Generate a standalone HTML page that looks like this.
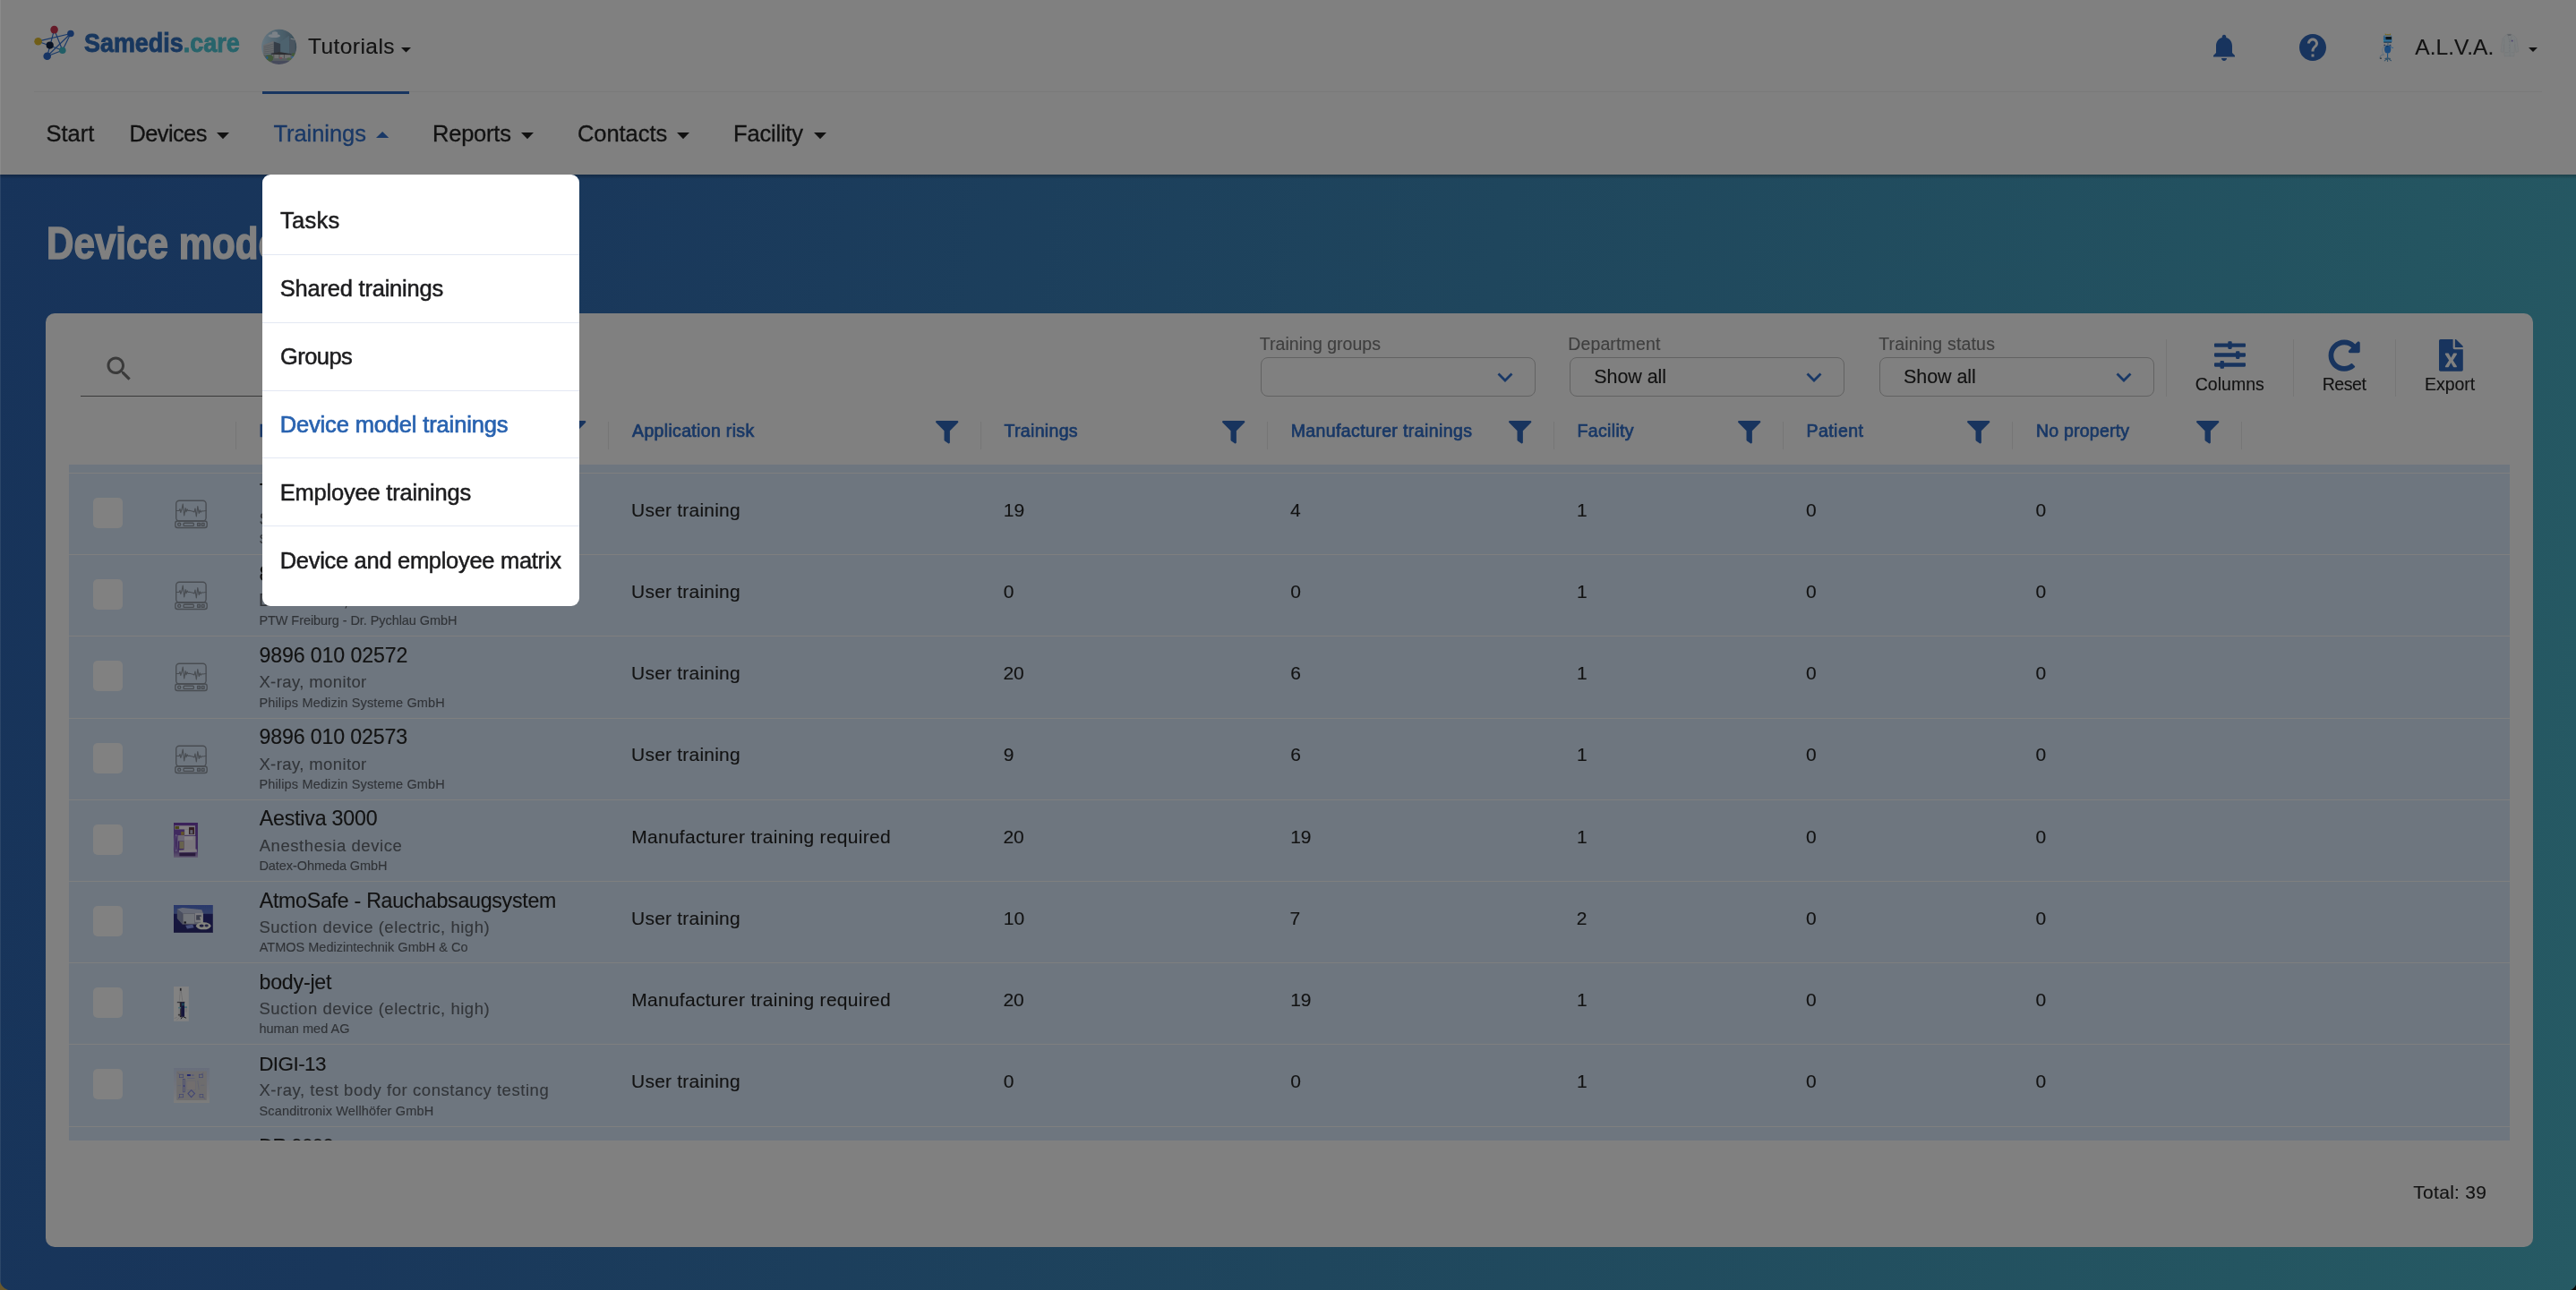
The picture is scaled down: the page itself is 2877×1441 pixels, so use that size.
<!DOCTYPE html><html lang="en"><head><meta charset="utf-8"><title>Device model trainings</title><style>
*{margin:0;padding:0;box-sizing:border-box}
html,body{width:2877px;height:1441px;overflow:hidden;background:#16305a}
body{font-family:"Liberation Sans", sans-serif;}
#app{will-change:transform;position:relative;width:2877px;height:1441px;overflow:hidden;
 background:linear-gradient(100deg,rgb(23,51,90) 0%,rgb(25,55,91) 20%,rgb(31,70,93) 55%,rgb(36,85,97) 88%,rgb(38,90,100) 100%)}
.t{position:absolute;white-space:nowrap;line-height:1;font-weight:400;-webkit-text-stroke:.12px}
.i{position:absolute;display:block;overflow:visible}
.abs{position:absolute}
header{position:absolute;left:0;top:0;width:2877px;height:195px;background:#808080}
.hline{position:absolute;left:38px;top:102px;width:2801px;height:1px;background:#7a7a7a}
.ind{position:absolute;left:293px;top:102px;width:164px;height:3px;background:rgb(24,53,96)}
.shade{position:absolute;left:0;top:195px;width:2877px;height:5px;background:linear-gradient(rgba(0,0,0,.25),rgba(0,0,0,0))}
h1{position:absolute;left:51.8px;top:247.2px;font-size:50px;line-height:1;font-weight:700;color:#808080;-webkit-text-stroke:1.6px #808080;white-space:nowrap;transform-origin:0 0;transform:scaleX(.843)}
.card{position:absolute;left:51px;top:350px;width:2778px;height:1043px;border-radius:10px;background:#808080}
.sel{position:absolute;top:399px;width:307px;height:44px;border:1.500px solid rgb(98,98,98);border-radius:8px}
.vd{position:absolute;top:379px;width:1px;height:64px;background:rgb(118,118,118)}
.cs{position:absolute;top:471px;width:1px;height:31px;background:rgb(118,118,118)}
.uline{position:absolute;left:90px;top:442px;width:540px;height:1px;background:rgb(58,58,58)}
#tb{position:absolute;left:0;top:0;width:2877px;height:1273.500px;overflow:hidden}
.band{position:absolute;left:77px;width:2726px;background:rgb(110,118,127)}
.row{position:absolute;left:77px;width:2726px;border-top:1px solid #7f7f7f;background:rgb(110,118,127)}
.cb{position:absolute;left:104px;width:33px;height:34px;border-radius:5px;background:#818181}
#menu{position:absolute;left:293px;top:195px;width:354px;height:481.500px;background:#fff;border-radius:9px}
#menu i{position:absolute;left:0;width:354px;height:1px;background:rgb(227,232,243)}
.corner{position:absolute;left:0;bottom:0;width:13px;height:13px;background:radial-gradient(circle at 13px 0,rgba(0,0,0,0) 13px,rgb(104,88,46) 14px)}
.corner2{position:absolute;right:0;bottom:0;width:10px;height:10px;background:radial-gradient(circle at 0 0,rgba(0,0,0,0) 10.300px,#0a0806 11.200px)}
.ledge{position:absolute;left:0;top:0;width:1px;height:1441px;background:rgba(255,255,255,.09)}
</style></head><body><div id="app">
<div class="shade"></div>
<header>
<svg class="i" style="left:0;top:0" width="100" height="80" viewBox="0 0 100 80"><g stroke="rgb(26,58,106)" stroke-width="1.2"><line x1="42.6" y1="46.2" x2="78.9" y2="37.5"/><line x1="42.6" y1="46.2" x2="69.8" y2="56.2"/><line x1="60.6" y1="33.1" x2="52.7" y2="62.8"/><line x1="60.6" y1="33.1" x2="69.8" y2="56.2"/><line x1="78.9" y1="37.5" x2="52.7" y2="62.8"/><line x1="78.9" y1="37.5" x2="69.8" y2="56.2"/><line x1="52.7" y1="62.8" x2="69.8" y2="56.2"/></g><circle cx="60.6" cy="33.1" r="4.3" fill="rgb(102,27,41)"/><circle cx="78.9" cy="37.5" r="3.8" fill="rgb(22,52,100)"/><circle cx="42.6" cy="46.2" r="4.3" fill="rgb(112,94,24)"/><circle cx="55.7" cy="50.6" r="4.1" fill="rgb(8,18,36)"/><circle cx="69.8" cy="56.2" r="3.8" fill="rgb(33,94,102)"/><circle cx="52.7" cy="62.8" r="4.3" fill="rgb(22,52,100)"/></svg>
<span class="t" id="logo" style="left:93.6px;top:33.2px;font-size:29.4px;font-weight:700;transform-origin:0 0;transform:scaleX(.916);color:rgb(24,55,94);-webkit-text-stroke:.9px rgb(24,55,94)">Samedis<span style="color:rgb(40,100,107);-webkit-text-stroke:.9px rgb(40,100,107)">.care</span></span>
<svg class="i" style="left:281px;top:27px" width="60" height="50" viewBox="0 0 1548 1290"><defs><clipPath id="av"><circle cx="790" cy="655" r="505"/></clipPath><linearGradient id="sky" x1="0" y1="0" x2="1" y2="0"><stop offset="0" stop-color="rgb(104,120,130)"/><stop offset=".55" stop-color="rgb(76,96,108)"/><stop offset="1" stop-color="rgb(58,76,86)"/></linearGradient><filter id="ab"><feGaussianBlur stdDeviation="9"/></filter></defs><g clip-path="url(#av)"><g filter="url(#ab)"><rect x="250" y="120" width="1080" height="1080" fill="url(#sky)"/><ellipse cx="650" cy="335" rx="175" ry="52" fill="rgb(124,130,136)"/><ellipse cx="670" cy="272" rx="82" ry="58" fill="rgb(124,130,136)"/><path d="M780 545l300-215 10 540-270-70z" fill="rgb(78,98,110)"/><path d="M1090 350l70 70 90 20 10 430h-170z" fill="rgb(72,84,94)"/><path d="M1125 400l120 30v30l-120-25z" fill="rgb(122,128,132)"/><path d="M335 600l285-110 20 10v330l-305 50z" fill="rgb(106,109,111)"/><path d="M350 650l280-80M350 700l280-65M350 750l280-50M350 800l280-35M350 845l280-20" stroke="rgb(80,86,92)" stroke-width="18" fill="none"/><path d="M640 500l190 70v230l-190 30z" fill="rgb(52,60,70)"/><rect x="270" y="880" width="1050" height="300" fill="rgb(86,92,96)"/><rect x="600" y="870" width="520" height="115" fill="rgb(112,114,114)"/><path d="M640 880v100M800 880v100M940 880v100" stroke="rgb(70,72,74)" stroke-width="22"/><path d="M560 842l230-42 360 58v24l-590-12z" fill="rgb(46,46,50)"/><ellipse cx="510" cy="980" rx="115" ry="95" fill="rgb(66,88,58)"/><ellipse cx="1205" cy="880" rx="55" ry="55" fill="rgb(66,90,58)"/><ellipse cx="1080" cy="1000" rx="70" ry="40" fill="rgb(78,100,70)"/><rect x="420" y="930" width="52" height="72" fill="rgb(40,90,140)"/><rect x="1150" y="930" width="60" height="52" fill="rgb(44,100,150)"/><rect x="800" y="960" width="80" height="34" fill="rgb(128,70,80)"/><path d="M560 1060h560l-120 110H640z" fill="rgb(70,76,92)"/></g></g></svg>
<span class="t" style="left:344.0px;top:40.0px;font-size:24.5px;letter-spacing:0.44px;color:#121212;">Tutorials</span>
<svg class="i" style="left:448px;top:52.5px" width="11" height="5.5" viewBox="0 0 11 5.5" ><polygon fill="#111" points="0,0 11,0 5.5,5.5"/></svg>
<svg class="i" style="left:2466px;top:34.5px" width="36" height="36" viewBox="0 0 24 24" ><path fill="rgb(24,52,94)" d="M12 22c1.1 0 2-.9 2-2h-4c0 1.1.89 2 2 2zm6-6v-5c0-3.07-1.64-5.64-4.5-6.32V4c0-.83-.67-1.5-1.5-1.5s-1.5.67-1.5 1.5v.68C7.63 5.36 6 7.92 6 11v5l-2 2v1h16v-1l-2-2z"/></svg>
<svg class="i" style="left:2565px;top:34.7px" width="36" height="36" viewBox="0 0 24 24" ><path fill="rgb(24,52,94)" d="M12 2C6.48 2 2 6.480 2 12s4.480 10 10 10 10-4.480 10-10S17.520 2 12 2zm1 17h-2v-2h2v2zm2.070-7.750l-.9.920C13.450 12.900 13 13.500 13 15h-2v-.5c0-1.100.450-2.100 1.170-2.830l1.240-1.260c.370-.360.590-.860.590-1.410 0-1.100-.9-2-2-2s-2 .9-2 2H8c0-2.210 1.790-4 4-4s4 1.790 4 4c0 .880-.360 1.680-.930 2.250z"/></svg>
<svg class="i" style="left:2640px;top:28px" width="60" height="50" viewBox="0 0 1548 1290"><filter id="rb"><feGaussianBlur stdDeviation="7"/></filter><g filter="url(#rb)"><path d="M615 300V238l45 35 35-18 35 18 45-33v60z" fill="rgb(126,106,30)"/><rect x="565" y="298" width="245" height="208" rx="38" fill="rgb(44,100,140)"/><rect x="600" y="300" width="190" height="36" rx="10" fill="rgb(112,122,130)"/><rect x="632" y="335" width="165" height="88" rx="14" fill="rgb(14,24,30)"/><rect x="610" y="425" width="190" height="55" rx="12" fill="rgb(52,114,156)"/><rect x="568" y="436" width="30" height="36" rx="8" fill="rgb(40,140,150)"/><rect x="575" y="482" width="225" height="24" rx="10" fill="rgb(16,28,40)"/><rect x="680" y="505" width="30" height="60" fill="rgb(60,90,115)"/><rect x="578" y="558" width="44" height="44" rx="8" fill="rgb(44,56,86)"/><rect x="738" y="562" width="44" height="42" rx="8" fill="rgb(44,56,86)"/><ellipse cx="688" cy="697" rx="93" ry="117" fill="rgb(26,76,126)"/><ellipse cx="675" cy="610" rx="30" ry="14" fill="rgb(20,52,90)"/><path d="M770 600l32 52 40 4" stroke="rgb(40,92,140)" stroke-width="22" fill="none" stroke-linecap="round"/><path d="M592 605c-50 60-75 110-55 190l40 62" stroke="rgb(92,112,128)" stroke-width="20" fill="none" stroke-linecap="round"/><path d="M565 855c-60 0-100 20-98 100" stroke="rgb(70,98,120)" stroke-width="20" fill="none" stroke-linecap="round"/><rect x="462" y="944" width="54" height="32" rx="8" fill="rgb(46,52,58)"/><rect x="671" y="805" width="30" height="140" fill="rgb(30,82,128)"/><path d="M686 950L600 1030M686 950l100 75M686 950v95M686 950l-70 20M686 950l75 15" stroke="rgb(52,82,104)" stroke-width="26" fill="none" stroke-linecap="round"/></g></svg>
<span class="t" style="left:2697.3px;top:41.0px;font-size:24.5px;letter-spacing:0.04px;color:#121212;">A.L.V.A.</span>
<svg class="i" style="left:2780px;top:28px" width="60" height="50" viewBox="0 0 1548 1290"><filter id="cb"><feGaussianBlur stdDeviation="6"/></filter><g filter="url(#cb)"><path d="M440 330l80-65q60-15 120 0l95 55 55 60 60 380-75 25-35-225-20 340H440l-10-340-30 225-65-20 55-385z" fill="rgb(124,127,128)" stroke="rgb(112,115,117)" stroke-width="10"/><path d="M520 265q60-15 120 0l-15 45h-85z" fill="rgb(98,101,104)"/><path d="M540 310l60 170 50-160" stroke="rgb(106,109,112)" stroke-width="10" fill="none"/><path d="M600 480v420M440 400l-10 160M735 400l5 160M455 790h105M640 790h72" stroke="rgb(110,113,116)" stroke-width="9" fill="none"/><circle cx="580" cy="480" r="11" fill="rgb(100,103,110)"/><circle cx="580" cy="572" r="11" fill="rgb(100,103,110)"/><circle cx="580" cy="660" r="11" fill="rgb(100,103,110)"/><circle cx="580" cy="745" r="11" fill="rgb(100,103,110)"/><rect x="640" y="432" width="44" height="44" fill="rgb(76,64,112)"/></g></svg>
<svg class="i" style="left:2824px;top:53px" width="10" height="5" viewBox="0 0 10 5" ><polygon fill="#111" points="0,0 10,0 5.0,5"/></svg>
<div class="hline"></div><div class="ind"></div>
<nav>
<span class="t" style="left:51.4px;top:137.0px;font-size:25.5px;letter-spacing:0.04px;color:#121212;-webkit-text-stroke:.3px;">Start</span>
<span class="t" style="left:144.5px;top:137.0px;font-size:25.35px;letter-spacing:-0.55px;color:#121212;-webkit-text-stroke:.3px;">Devices</span>
<span class="t" style="left:305.5px;top:137.0px;font-size:25.5px;letter-spacing:-0.06px;color:rgb(25,56,102);-webkit-text-stroke:.3px;">Trainings</span>
<span class="t" style="left:483.0px;top:137.0px;font-size:25.5px;letter-spacing:-0.22px;color:#121212;-webkit-text-stroke:.3px;">Reports</span>
<span class="t" style="left:645.0px;top:137.0px;font-size:25.5px;letter-spacing:-0.06px;color:#121212;-webkit-text-stroke:.3px;">Contacts</span>
<span class="t" style="left:819.0px;top:137.0px;font-size:25.5px;letter-spacing:-0.19px;color:#121212;-webkit-text-stroke:.3px;">Facility</span>
<svg class="i" style="left:242.4px;top:147.8px" width="14" height="7.2" viewBox="0 0 14 7.2" ><polygon fill="#111" points="0,0 14,0 7.0,7.2"/></svg>
<svg class="i" style="left:419.7px;top:147px" width="14.3" height="7" viewBox="0 0 14.3 7" ><polygon fill="rgb(25,56,102)" points="0,7 7.15,0 14.3,7"/></svg>
<svg class="i" style="left:582px;top:147.8px" width="14" height="7.2" viewBox="0 0 14 7.2" ><polygon fill="#111" points="0,0 14,0 7.0,7.2"/></svg>
<svg class="i" style="left:755.9px;top:147.8px" width="14" height="7.2" viewBox="0 0 14 7.2" ><polygon fill="#111" points="0,0 14,0 7.0,7.2"/></svg>
<svg class="i" style="left:908.6px;top:147.8px" width="14" height="7.2" viewBox="0 0 14 7.2" ><polygon fill="#111" points="0,0 14,0 7.0,7.2"/></svg>
</nav></header>
<main>
<h1>Device model trainings</h1>
<section class="card"></section>
<svg class="i" style="left:114.5px;top:393.6px" width="36" height="36" viewBox="0 0 24 24" ><path fill="rgb(58,58,58)" d="M15.500 14h-.790l-.280-.270C15.410 12.590 16 11.110 16 9.500 16 5.910 13.090 3 9.500 3S3 5.910 3 9.500 5.910 16 9.500 16c1.610 0 3.090-.590 4.230-1.570l.270.280v.790l5 4.990L20.490 19l-4.990-5zm-6 0C7.010 14 5 11.990 5 9.500S7.010 5 9.500 5 14 7.010 14 9.500 11.990 14 9.500 14z"/></svg>
<div class="uline"></div>
<span class="t" style="left:1406.8px;top:375.0px;font-size:19.5px;letter-spacing:0.03px;color:rgb(62,62,62);">Training groups</span>
<div class="sel" style="left:1408px"></div>
<svg class="i" style="left:1672px;top:416px" width="18" height="11" viewBox="0 0 18 11" ><polyline points="1.500,1.500 9,9 16.500,1.500" fill="none" stroke="rgb(25,56,102)" stroke-width="2.800"/></svg>
<span class="t" style="left:1751.2px;top:375.0px;font-size:19.5px;letter-spacing:0.14px;color:rgb(62,62,62);">Department</span>
<div class="sel" style="left:1753px"></div>
<svg class="i" style="left:2017px;top:416px" width="18" height="11" viewBox="0 0 18 11" ><polyline points="1.500,1.500 9,9 16.500,1.500" fill="none" stroke="rgb(25,56,102)" stroke-width="2.800"/></svg>
<span class="t" style="left:2098.2px;top:375.0px;font-size:19.5px;letter-spacing:0.18px;color:rgb(62,62,62);">Training status</span>
<div class="sel" style="left:2099px"></div>
<svg class="i" style="left:2363px;top:416px" width="18" height="11" viewBox="0 0 18 11" ><polyline points="1.500,1.500 9,9 16.500,1.500" fill="none" stroke="rgb(25,56,102)" stroke-width="2.800"/></svg>
<span class="t" style="left:1780.3px;top:411.0px;font-size:21.5px;letter-spacing:-0.07px;color:#121212;">Show all</span>
<span class="t" style="left:2126.0px;top:411.0px;font-size:21.5px;letter-spacing:-0.07px;color:#121212;">Show all</span>
<div class="vd" style="left:2419px"></div>
<div class="vd" style="left:2561px"></div>
<div class="vd" style="left:2675px"></div>
<svg class="i" style="left:2473px;top:378.8px" width="35" height="35" viewBox="0 0 512 512" ><path fill="rgb(24,52,94)" d="M496 384H160v-16c0-8.8-7.2-16-16-16h-32c-8.8 0-16 7.2-16 16v16H16c-8.8 0-16 7.2-16 16v32c0 8.8 7.2 16 16 16h80v16c0 8.8 7.2 16 16 16h32c8.8 0 16-7.2 16-16v-16h336c8.8 0 16-7.2 16-16v-32c0-8.8-7.2-16-16-16zm0-160h-80v-16c0-8.8-7.2-16-16-16h-32c-8.8 0-16 7.2-16 16v16H16c-8.8 0-16 7.2-16 16v32c0 8.8 7.2 16 16 16h336v16c0 8.8 7.2 16 16 16h32c8.8 0 16-7.2 16-16v-16h80c8.8 0 16-7.2 16-16v-32c0-8.8-7.2-16-16-16zm0-160H288V48c0-8.8-7.2-16-16-16h-32c-8.8 0-16 7.2-16 16v16H16C7.2 64 0 71.2 0 80v32c0 8.8 7.2 16 16 16h208v16c0 8.8 7.2 16 16 16h32c8.8 0 16-7.2 16-16v-16h208c8.8 0 16-7.2 16-16V80c0-8.8-7.2-16-16-16z"/></svg>
<svg class="i" style="left:2600.3px;top:379px" width="36.3" height="36.3" viewBox="0 0 512 512" ><path fill="rgb(24,52,94)" d="M256.455 8c66.269.119 126.437 26.233 170.859 68.685l35.715-35.715C478.149 25.851 504 36.559 504 57.941V192c0 13.255-10.745 24-24 24H345.941c-21.382 0-32.09-25.851-16.971-40.971l41.75-41.75c-30.864-28.899-70.801-44.907-113.23-45.273-92.398-.798-170.283 73.977-169.484 169.442C88.764 348.009 162.184 424 256 424c41.127 0 79.997-14.678 110.629-41.556 4.743-4.161 11.906-3.908 16.368.553l39.662 39.662c4.872 4.872 4.631 12.815-.482 17.433C378.202 479.813 319.926 504 256 504 119.034 504 8.001 392.967 8 256.002 7.999 119.193 119.646 7.755 256.455 8z"/></svg>
<svg class="i" style="left:2723.6px;top:379px" width="26.8" height="35.7" viewBox="0 0 384 512" ><path fill="rgb(24,52,94)" d="M224 136V0H24C10.7 0 0 10.7 0 24v464c0 13.3 10.7 24 24 24h336c13.3 0 24-10.7 24-24V160H248c-13.2 0-24-10.8-24-24zm60.1 106.5L224 336l60.1 93.5c5.1 8-.6 18.5-10.1 18.5h-34.9c-4.4 0-8.5-2.4-10.6-6.3C208.9 405.5 192 373 192 373c-6.4 14.8-10 20-36.600 68.800-2.100 3.900-6.100 6.300-10.500 6.300H110c-9.500 0-15.200-10.500-10.100-18.500l60.300-93.500-60.300-93.500c-5.200-8 .6-18.500 10.100-18.500h34.800c4.400 0 8.500 2.400 10.600 6.300 26.100 48.800 20 33.600 36.600 68.500 0 0 6.100-11.700 36.600-68.500 2.100-3.900 6.200-6.300 10.600-6.300H274c9.500-.1 15.200 10.400 10.100 18.400zM384 121.900v6.100H256V0h6.100c6.400 0 12.500 2.500 17 7l97.900 98c4.500 4.500 7 10.600 7 16.900z"/></svg>
<span class="t" style="left:2451.7px;top:420.0px;font-size:19.5px;letter-spacing:0.03px;color:#121212;">Columns</span>
<span class="t" style="left:2593.7px;top:420.0px;font-size:19.5px;letter-spacing:-0.45px;color:#121212;">Reset</span>
<span class="t" style="left:2708.1px;top:420.0px;font-size:19.5px;letter-spacing:-0.08px;color:#121212;">Export</span>
<div class="cs" style="left:263px"></div>
<div class="cs" style="left:679px"></div>
<div class="cs" style="left:1095px"></div>
<div class="cs" style="left:1415px"></div>
<div class="cs" style="left:1735px"></div>
<div class="cs" style="left:1991px"></div>
<div class="cs" style="left:2247px"></div>
<div class="cs" style="left:2503px"></div>
<span class="t" style="left:289.2px;top:471.0px;font-size:20.51px;letter-spacing:0.55px;color:rgb(25,56,102);-webkit-text-stroke:0.7px rgb(25,56,102);">Model</span>
<span class="t" style="left:706.1px;top:472.0px;font-size:19.5px;letter-spacing:0.33px;color:rgb(25,56,102);-webkit-text-stroke:0.7px rgb(25,56,102);">Application risk</span>
<span class="t" style="left:1121.5px;top:472.0px;font-size:19.5px;letter-spacing:0.33px;color:rgb(25,56,102);-webkit-text-stroke:0.7px rgb(25,56,102);">Trainings</span>
<span class="t" style="left:1441.7px;top:472.0px;font-size:19.5px;letter-spacing:0.39px;color:rgb(25,56,102);-webkit-text-stroke:0.7px rgb(25,56,102);">Manufacturer trainings</span>
<span class="t" style="left:1761.5px;top:472.0px;font-size:19.5px;letter-spacing:0.35px;color:rgb(25,56,102);-webkit-text-stroke:0.7px rgb(25,56,102);">Facility</span>
<span class="t" style="left:2017.6px;top:472.0px;font-size:19.5px;letter-spacing:0.42px;color:rgb(25,56,102);-webkit-text-stroke:0.7px rgb(25,56,102);">Patient</span>
<span class="t" style="left:2274.0px;top:472.0px;font-size:19.5px;letter-spacing:0.22px;color:rgb(25,56,102);-webkit-text-stroke:0.7px rgb(25,56,102);">No property</span>
<svg class="i" style="left:629.0px;top:469.8px" width="25.4" height="25.4" viewBox="0 0 512 512" ><path fill="rgb(24,52,94)" d="M487.976 0H24.028C2.71 0-8.047 25.866 7.058 40.971L192 225.941V432c0 7.831 3.821 15.17 10.237 19.662l80 55.98C298.02 518.69 320 507.493 320 487.98V225.941l184.947-184.97C520.021 25.896 509.338 0 487.976 0z"/></svg>
<svg class="i" style="left:1045.0px;top:469.8px" width="25.4" height="25.4" viewBox="0 0 512 512" ><path fill="rgb(24,52,94)" d="M487.976 0H24.028C2.71 0-8.047 25.866 7.058 40.971L192 225.941V432c0 7.831 3.821 15.17 10.237 19.662l80 55.98C298.02 518.69 320 507.493 320 487.98V225.941l184.947-184.97C520.021 25.896 509.338 0 487.976 0z"/></svg>
<svg class="i" style="left:1365.2px;top:469.8px" width="25.4" height="25.4" viewBox="0 0 512 512" ><path fill="rgb(24,52,94)" d="M487.976 0H24.028C2.71 0-8.047 25.866 7.058 40.971L192 225.941V432c0 7.831 3.821 15.17 10.237 19.662l80 55.98C298.02 518.69 320 507.493 320 487.98V225.941l184.947-184.97C520.021 25.896 509.338 0 487.976 0z"/></svg>
<svg class="i" style="left:1685.2px;top:469.8px" width="25.4" height="25.4" viewBox="0 0 512 512" ><path fill="rgb(24,52,94)" d="M487.976 0H24.028C2.71 0-8.047 25.866 7.058 40.971L192 225.941V432c0 7.831 3.821 15.17 10.237 19.662l80 55.98C298.02 518.69 320 507.493 320 487.98V225.941l184.947-184.97C520.021 25.896 509.338 0 487.976 0z"/></svg>
<svg class="i" style="left:1941.0px;top:469.8px" width="25.4" height="25.4" viewBox="0 0 512 512" ><path fill="rgb(24,52,94)" d="M487.976 0H24.028C2.71 0-8.047 25.866 7.058 40.971L192 225.941V432c0 7.831 3.821 15.17 10.237 19.662l80 55.98C298.02 518.69 320 507.493 320 487.98V225.941l184.947-184.97C520.021 25.896 509.338 0 487.976 0z"/></svg>
<svg class="i" style="left:2197.2px;top:469.8px" width="25.4" height="25.4" viewBox="0 0 512 512" ><path fill="rgb(24,52,94)" d="M487.976 0H24.028C2.71 0-8.047 25.866 7.058 40.971L192 225.941V432c0 7.831 3.821 15.17 10.237 19.662l80 55.98C298.02 518.69 320 507.493 320 487.98V225.941l184.947-184.97C520.021 25.896 509.338 0 487.976 0z"/></svg>
<svg class="i" style="left:2453.2px;top:469.8px" width="25.4" height="25.4" viewBox="0 0 512 512" ><path fill="rgb(24,52,94)" d="M487.976 0H24.028C2.71 0-8.047 25.866 7.058 40.971L192 225.941V432c0 7.831 3.821 15.17 10.237 19.662l80 55.98C298.02 518.69 320 507.493 320 487.98V225.941l184.947-184.97C520.021 25.896 509.338 0 487.976 0z"/></svg>
<div id="tb"><div class="band" style="top:519px;height:10px"></div>
<div class="row" style="top:528px;height:91px"></div>
<div class="cb" style="top:556px"></div>
<svg class="i" style="left:195px;top:557.6px" width="37" height="33" viewBox="0 0 37 33" ><g fill="none" stroke="rgb(73,77,82)" stroke-width="1.35" stroke-linejoin="round" stroke-linecap="round"><rect x="1.7" y="1.2" width="33.4" height="22.8" rx="3.5"/><rect x="0.8" y="24" width="35.4" height="7.5" rx="2.5"/><circle cx="5.2" cy="27.8" r="1.6"/><rect x="10" y="26.2" width="11.4" height="3.2" rx="1"/><rect x="25.6" y="26.5" width="2.8" height="2.7"/><rect x="30.3" y="26.500" width="2.8" height="2.7"/><polyline stroke-width="1.1" points="1.7,12.5 5,12.500 6,10.500 6.800,14.500 8,11 9.200,5 10.700,18 12.200,9.500 13,13.800 14,10.800 15,12.500 16.500,12.200 20.500,13.200 22,14 23,10 24.300,19 25.800,7.500 27.200,15.500 28.200,11.800 29.200,14.200 30.200,12.800 31.500,13 35.100,12.500"/></g></svg>
<span class="t" style="left:288.9px;top:537.0px;font-size:25.2px;letter-spacing:0.55px;color:#121212;">7100 Ultrasound</span>
<span class="t" style="left:289.4px;top:571.0px;font-size:18.5px;letter-spacing:0.19px;color:rgb(50,53,57);">Sonography device</span>
<span class="t" style="left:289.5px;top:595.0px;font-size:14.5px;letter-spacing:0.22px;color:rgb(48,51,55);">Siemens Healthcare GmbH</span>
<span class="t" style="left:705.1px;top:559.0px;font-size:21px;letter-spacing:0.21px;color:#121212;">User training</span>
<span class="t" style="left:1120.8px;top:559.0px;font-size:21px;letter-spacing:-0.10px;color:#121212;">19</span>
<span class="t" style="left:1441.0px;top:559.0px;font-size:21px;letter-spacing:-0.10px;color:#121212;">4</span>
<span class="t" style="left:1761.0px;top:559.0px;font-size:21px;letter-spacing:-0.10px;color:#121212;">1</span>
<span class="t" style="left:2017.1px;top:559.0px;font-size:21px;letter-spacing:-0.10px;color:#121212;">0</span>
<span class="t" style="left:2273.5px;top:559.0px;font-size:21px;letter-spacing:-0.10px;color:#121212;">0</span>
<div class="row" style="top:619px;height:91px"></div>
<div class="cb" style="top:647px"></div>
<svg class="i" style="left:195px;top:648.6px" width="37" height="33" viewBox="0 0 37 33" ><g fill="none" stroke="rgb(73,77,82)" stroke-width="1.35" stroke-linejoin="round" stroke-linecap="round"><rect x="1.7" y="1.2" width="33.4" height="22.8" rx="3.5"/><rect x="0.8" y="24" width="35.4" height="7.5" rx="2.5"/><circle cx="5.2" cy="27.8" r="1.6"/><rect x="10" y="26.2" width="11.4" height="3.2" rx="1"/><rect x="25.6" y="26.5" width="2.8" height="2.7"/><rect x="30.3" y="26.500" width="2.8" height="2.7"/><polyline stroke-width="1.1" points="1.7,12.5 5,12.500 6,10.500 6.800,14.500 8,11 9.200,5 10.700,18 12.200,9.500 13,13.800 14,10.800 15,12.500 16.500,12.200 20.500,13.200 22,14 23,10 24.300,19 25.800,7.500 27.200,15.500 28.200,11.800 29.200,14.200 30.200,12.800 31.500,13 35.100,12.500"/></g></svg>
<span class="t" style="left:289.5px;top:630.0px;font-size:22.99px;letter-spacing:-0.55px;color:#121212;">8000 UNIDOS</span>
<span class="t" style="left:289.1px;top:661.0px;font-size:19.87px;letter-spacing:0.55px;color:rgb(50,53,57);">Dosimeter, radiation</span>
<span class="t" style="left:289.4px;top:686.0px;font-size:14.5px;letter-spacing:-0.07px;color:rgb(48,51,55);">PTW Freiburg - Dr. Pychlau GmbH</span>
<span class="t" style="left:705.1px;top:650.0px;font-size:21px;letter-spacing:0.21px;color:#121212;">User training</span>
<span class="t" style="left:1120.8px;top:650.0px;font-size:21px;letter-spacing:-0.10px;color:#121212;">0</span>
<span class="t" style="left:1441.2px;top:650.0px;font-size:21px;letter-spacing:-0.10px;color:#121212;">0</span>
<span class="t" style="left:1761.0px;top:650.0px;font-size:21px;letter-spacing:-0.10px;color:#121212;">1</span>
<span class="t" style="left:2017.1px;top:650.0px;font-size:21px;letter-spacing:-0.10px;color:#121212;">0</span>
<span class="t" style="left:2273.5px;top:650.0px;font-size:21px;letter-spacing:-0.10px;color:#121212;">0</span>
<div class="row" style="top:710px;height:92px"></div>
<div class="cb" style="top:738px"></div>
<svg class="i" style="left:195px;top:739.6px" width="37" height="33" viewBox="0 0 37 33" ><g fill="none" stroke="rgb(73,77,82)" stroke-width="1.35" stroke-linejoin="round" stroke-linecap="round"><rect x="1.7" y="1.2" width="33.4" height="22.8" rx="3.5"/><rect x="0.8" y="24" width="35.4" height="7.5" rx="2.5"/><circle cx="5.2" cy="27.8" r="1.6"/><rect x="10" y="26.2" width="11.4" height="3.2" rx="1"/><rect x="25.6" y="26.5" width="2.8" height="2.7"/><rect x="30.3" y="26.500" width="2.8" height="2.7"/><polyline stroke-width="1.1" points="1.7,12.5 5,12.500 6,10.500 6.800,14.500 8,11 9.200,5 10.700,18 12.200,9.500 13,13.800 14,10.800 15,12.500 16.500,12.200 20.500,13.200 22,14 23,10 24.300,19 25.800,7.500 27.200,15.500 28.200,11.800 29.200,14.200 30.200,12.800 31.500,13 35.100,12.500"/></g></svg>
<span class="t" style="left:289.4px;top:721.0px;font-size:23.2px;letter-spacing:-0.13px;color:#121212;">9896 010 02572</span>
<span class="t" style="left:289.4px;top:753.0px;font-size:18.5px;letter-spacing:0.39px;color:rgb(50,53,57);">X-ray, monitor</span>
<span class="t" style="left:289.4px;top:778.0px;font-size:14.5px;letter-spacing:0.16px;color:rgb(48,51,55);">Philips Medizin Systeme GmbH</span>
<span class="t" style="left:705.1px;top:741.0px;font-size:21px;letter-spacing:0.21px;color:#121212;">User training</span>
<span class="t" style="left:1120.5px;top:741.0px;font-size:21px;letter-spacing:-0.10px;color:#121212;">20</span>
<span class="t" style="left:1441.2px;top:741.0px;font-size:21px;letter-spacing:-0.10px;color:#121212;">6</span>
<span class="t" style="left:1761.0px;top:741.0px;font-size:21px;letter-spacing:-0.10px;color:#121212;">1</span>
<span class="t" style="left:2017.1px;top:741.0px;font-size:21px;letter-spacing:-0.10px;color:#121212;">0</span>
<span class="t" style="left:2273.5px;top:741.0px;font-size:21px;letter-spacing:-0.10px;color:#121212;">0</span>
<div class="row" style="top:802px;height:91px"></div>
<div class="cb" style="top:830px"></div>
<svg class="i" style="left:195px;top:831.6px" width="37" height="33" viewBox="0 0 37 33" ><g fill="none" stroke="rgb(73,77,82)" stroke-width="1.35" stroke-linejoin="round" stroke-linecap="round"><rect x="1.7" y="1.2" width="33.4" height="22.8" rx="3.5"/><rect x="0.8" y="24" width="35.4" height="7.5" rx="2.5"/><circle cx="5.2" cy="27.8" r="1.6"/><rect x="10" y="26.2" width="11.4" height="3.2" rx="1"/><rect x="25.6" y="26.5" width="2.8" height="2.7"/><rect x="30.3" y="26.500" width="2.8" height="2.7"/><polyline stroke-width="1.1" points="1.7,12.5 5,12.500 6,10.500 6.800,14.500 8,11 9.200,5 10.700,18 12.200,9.500 13,13.800 14,10.800 15,12.500 16.500,12.200 20.500,13.200 22,14 23,10 24.300,19 25.800,7.500 27.200,15.500 28.200,11.800 29.200,14.200 30.200,12.800 31.500,13 35.100,12.500"/></g></svg>
<span class="t" style="left:289.4px;top:812.0px;font-size:23.2px;letter-spacing:-0.15px;color:#121212;">9896 010 02573</span>
<span class="t" style="left:289.4px;top:845.0px;font-size:18.5px;letter-spacing:0.39px;color:rgb(50,53,57);">X-ray, monitor</span>
<span class="t" style="left:289.4px;top:869.0px;font-size:14.5px;letter-spacing:0.16px;color:rgb(48,51,55);">Philips Medizin Systeme GmbH</span>
<span class="t" style="left:705.1px;top:832.0px;font-size:21px;letter-spacing:0.21px;color:#121212;">User training</span>
<span class="t" style="left:1120.7px;top:832.0px;font-size:21px;letter-spacing:-0.10px;color:#121212;">9</span>
<span class="t" style="left:1441.2px;top:832.0px;font-size:21px;letter-spacing:-0.10px;color:#121212;">6</span>
<span class="t" style="left:1761.0px;top:832.0px;font-size:21px;letter-spacing:-0.10px;color:#121212;">1</span>
<span class="t" style="left:2017.1px;top:832.0px;font-size:21px;letter-spacing:-0.10px;color:#121212;">0</span>
<span class="t" style="left:2273.5px;top:832.0px;font-size:21px;letter-spacing:-0.10px;color:#121212;">0</span>
<div class="row" style="top:893px;height:91px"></div>
<div class="cb" style="top:921px"></div>
<svg class="i" style="left:194.1px;top:919px;overflow:hidden" width="26.94" height="38.87" viewBox="0 0 26.94 38.87" ><filter id="bl" x="-10%" y="-10%" width="120%" height="120%"><feGaussianBlur stdDeviation=".45"/></filter><g filter="url(#bl)"><defs><linearGradient id="ga" x1="0" y1="0" x2="0" y2="1"><stop offset="0" stop-color="rgb(58,34,90)"/><stop offset=".75" stop-color="rgb(60,40,90)"/><stop offset="1" stop-color="rgb(96,88,112)"/></linearGradient></defs><rect width="26.94" height="38.87" fill="url(#ga)"/><rect x="0.85" y="3.2" width="23.23" height="11.08" fill="rgb(118,114,122)" /><rect x="1.49" y="4.05" width="4.48" height="2.86" fill="rgb(74,70,24)" /><rect x="6.82" y="3.84" width="9.8" height="3.41" fill="rgb(128,124,128)" /><rect x="17.05" y="5.12" width="5.88" height="7.75" fill="rgb(48,30,34)" /><rect x="18.33" y="8.1" width="2.98" height="4.26" fill="rgb(96,94,110)" /><rect x="12.79" y="7.89" width="3.83" height="5.32" fill="rgb(132,130,134)" /><rect x="0.85" y="7.46" width="11.09" height="6.82" fill="rgb(64,44,94)" /><rect x="8.1" y="10.02" width="3.62" height="3.83" fill="rgb(98,82,44)" /><rect x="11.51" y="14.92" width="13.0" height="16.2" fill="rgb(122,118,124)" /><rect x="11.08" y="15.56" width="10.23" height="3.62" fill="rgb(132,128,134)" /><rect x="4.69" y="14.07" width="7.25" height="6.39" fill="rgb(108,104,116)" /><rect x="6.39" y="20.89" width="5.12" height="8.1" fill="rgb(104,98,78)" /><ellipse cx="2.64" cy="22.59" rx="1.62" ry="9.38" fill="none" stroke="rgb(118,112,138)" stroke-width=".6"/><polygon points="5.97,30.69 25.58,29.41 26.0,32.82 5.97,33.25" fill="rgb(126,122,128)" /><rect x="6.39" y="33.67" width="17.91" height="3.63" fill="rgb(44,26,62)" /></g></svg>
<span class="t" style="left:289.7px;top:903.0px;font-size:23.2px;letter-spacing:-0.20px;color:#121212;">Aestiva 3000</span>
<span class="t" style="left:289.7px;top:936.0px;font-size:18.52px;letter-spacing:0.55px;color:rgb(50,53,57);">Anesthesia device</span>
<span class="t" style="left:289.4px;top:960.0px;font-size:14.5px;letter-spacing:-0.07px;color:rgb(48,51,55);">Datex-Ohmeda GmbH</span>
<span class="t" style="left:705.2px;top:924.0px;font-size:21px;letter-spacing:0.28px;color:#121212;">Manufacturer training required</span>
<span class="t" style="left:1120.5px;top:924.0px;font-size:21px;letter-spacing:-0.10px;color:#121212;">20</span>
<span class="t" style="left:1441.2px;top:924.0px;font-size:21px;letter-spacing:-0.10px;color:#121212;">19</span>
<span class="t" style="left:1761.0px;top:924.0px;font-size:21px;letter-spacing:-0.10px;color:#121212;">1</span>
<span class="t" style="left:2017.1px;top:924.0px;font-size:21px;letter-spacing:-0.10px;color:#121212;">0</span>
<span class="t" style="left:2273.5px;top:924.0px;font-size:21px;letter-spacing:-0.10px;color:#121212;">0</span>
<div class="row" style="top:984px;height:91px"></div>
<div class="cb" style="top:1012px"></div>
<svg class="i" style="left:194.1px;top:1011px;overflow:hidden" width="43.82" height="30.86" viewBox="0 0 43.82 30.86" ><filter id="bl" x="-10%" y="-10%" width="120%" height="120%"><feGaussianBlur stdDeviation=".45"/></filter><g filter="url(#bl)"><defs><linearGradient id="gb" x1="0" y1="0" x2="0" y2="1"><stop offset="0" stop-color="rgb(40,56,108)"/><stop offset=".3" stop-color="rgb(52,64,104)"/><stop offset=".34" stop-color="rgb(24,24,66)"/><stop offset="1" stop-color="rgb(22,22,58)"/></linearGradient></defs><rect width="43.82" height="30.86" fill="url(#gb)"/><polygon points="3.84,4.56 9.8,3.07 31.33,5.2 32.82,9.04 9.8,9.04" fill="rgb(102,106,118)" /><polygon points="3.84,4.56 9.8,9.04 9.8,21.82 3.84,15.0" fill="rgb(76,80,94)" /><rect x="9.8" y="9.04" width="23.23" height="12.57" fill="rgb(92,94,104)" /><rect x="11.08" y="9.89" width="11.94" height="10.87" fill="rgb(114,116,122)" /><rect x="11.51" y="18.41" width="2.34" height="2.14" fill="rgb(20,20,30)" /><rect x="23.87" y="9.04" width="8.95" height="9.8" fill="rgb(124,124,128)" /><rect x="25.15" y="11.17" width="5.54" height="5.54" fill="rgb(62,64,78)" /><polygon points="13.21,22.68 21.31,21.82 22.59,25.23 14.92,26.51" fill="rgb(70,80,122)" /><ellipse cx="33.25" cy="23.32" rx="8.31" ry="4.05" fill="rgb(132,132,126)" /><ellipse cx="31.12" cy="23.1" rx="2.56" ry="1.71" fill="rgb(34,34,66)" /><ellipse cx="36.66" cy="23.1" rx="2.13" ry="1.49" fill="rgb(40,40,70)" /><polygon points="28.99,12.87 31.12,13.51 32.4,19.69 30.69,20.12" fill="rgb(134,134,128)" /></g></svg>
<span class="t" style="left:289.7px;top:995.0px;font-size:23.2px;letter-spacing:-0.27px;color:#121212;">AtmoSafe - Rauchabsaugsystem</span>
<span class="t" style="left:289.4px;top:1027.0px;font-size:18.5px;letter-spacing:0.52px;color:rgb(50,53,57);">Suction device (electric, high)</span>
<span class="t" style="left:289.7px;top:1051.0px;font-size:14.5px;letter-spacing:0.01px;color:rgb(48,51,55);">ATMOS Medizintechnik GmbH & Co</span>
<span class="t" style="left:705.1px;top:1015.0px;font-size:21px;letter-spacing:0.21px;color:#121212;">User training</span>
<span class="t" style="left:1120.8px;top:1015.0px;font-size:21px;letter-spacing:-0.10px;color:#121212;">10</span>
<span class="t" style="left:1440.6px;top:1015.0px;font-size:21px;letter-spacing:-0.10px;color:#121212;">7</span>
<span class="t" style="left:1760.7px;top:1015.0px;font-size:21px;letter-spacing:-0.10px;color:#121212;">2</span>
<span class="t" style="left:2017.1px;top:1015.0px;font-size:21px;letter-spacing:-0.10px;color:#121212;">0</span>
<span class="t" style="left:2273.5px;top:1015.0px;font-size:21px;letter-spacing:-0.10px;color:#121212;">0</span>
<div class="row" style="top:1075px;height:91px"></div>
<div class="cb" style="top:1103px"></div>
<svg class="i" style="left:194.1px;top:1102.1px;overflow:hidden" width="16.84" height="38.79" viewBox="0 0 16.84 38.79" ><filter id="bl" x="-10%" y="-10%" width="120%" height="120%"><feGaussianBlur stdDeviation=".45"/></filter><g filter="url(#bl)"><rect width="16.84" height="38.79" fill="rgb(130,130,130)"/><rect x="6.91" y="1.83" width="1.7" height="2.99" fill="rgb(36,36,40)" /><line x1="7.25" y1="4.82" x2="6.39" y2="16.33" stroke="rgb(100,100,102)" stroke-width="0.5"/><line x1="8.31" y1="4.82" x2="9.8" y2="16.33" stroke="rgb(96,96,98)" stroke-width="0.5"/><rect x="3.84" y="16.97" width="8.52" height="1.27" fill="rgb(52,52,58)" /><rect x="6.82" y="17.6" width="1.92" height="16.63" fill="rgb(34,34,40)" /><rect x="8.31" y="17.6" width="3.71" height="16.2" fill="rgb(22,20,58)" /><rect x="9.16" y="18.46" width="2.56" height="2.98" fill="rgb(30,70,86)" /><rect x="5.12" y="22.93" width="2.98" height="1.71" fill="rgb(70,108,116)" /><rect x="11.94" y="22.29" width="2.98" height="1.71" fill="rgb(70,108,116)" /><rect x="5.12" y="24.64" width="2.13" height="6.18" fill="rgb(122,122,124)" /><rect x="12.15" y="24.0" width="2.77" height="4.69" fill="rgb(120,120,122)" /><rect x="4.9" y="30.82" width="3.2" height="1.7" fill="rgb(58,58,62)" /><line x1="9.8" y1="33.8" x2="8.1" y2="36.36" stroke="rgb(30,30,34)" stroke-width="1"/><line x1="10.66" y1="33.8" x2="14.07" y2="35.29" stroke="rgb(30,30,34)" stroke-width="1"/><line x1="0.43" y1="35.72" x2="3.84" y2="34.23" stroke="rgb(106,106,108)" stroke-width="0.6"/><line x1="3.41" y1="37.21" x2="5.97" y2="35.08" stroke="rgb(106,106,108)" stroke-width="0.6"/></g></svg>
<span class="t" style="left:289.5px;top:1086.0px;font-size:23.2px;letter-spacing:-0.22px;color:#121212;">body-jet</span>
<span class="t" style="left:289.4px;top:1118.0px;font-size:18.5px;letter-spacing:0.52px;color:rgb(50,53,57);">Suction device (electric, high)</span>
<span class="t" style="left:289.4px;top:1142.0px;font-size:14.5px;letter-spacing:0.03px;color:rgb(48,51,55);">human med AG</span>
<span class="t" style="left:705.2px;top:1106.0px;font-size:21px;letter-spacing:0.28px;color:#121212;">Manufacturer training required</span>
<span class="t" style="left:1120.5px;top:1106.0px;font-size:21px;letter-spacing:-0.10px;color:#121212;">20</span>
<span class="t" style="left:1441.2px;top:1106.0px;font-size:21px;letter-spacing:-0.10px;color:#121212;">19</span>
<span class="t" style="left:1761.0px;top:1106.0px;font-size:21px;letter-spacing:-0.10px;color:#121212;">1</span>
<span class="t" style="left:2017.1px;top:1106.0px;font-size:21px;letter-spacing:-0.10px;color:#121212;">0</span>
<span class="t" style="left:2273.5px;top:1106.0px;font-size:21px;letter-spacing:-0.10px;color:#121212;">0</span>
<div class="row" style="top:1166px;height:92px"></div>
<div class="cb" style="top:1194px"></div>
<svg class="i" style="left:194.1px;top:1193px;overflow:hidden" width="39.86" height="39.0" viewBox="0 0 39.86 39.0" ><filter id="bl" x="-10%" y="-10%" width="120%" height="120%"><feGaussianBlur stdDeviation=".45"/></filter><g filter="url(#bl)"><defs><linearGradient id="gd" x1="0" y1="0" x2="0" y2="1"><stop offset="0" stop-color="rgb(104,110,124)"/><stop offset=".7" stop-color="rgb(116,118,124)"/><stop offset="1" stop-color="rgb(124,124,124)"/></linearGradient></defs><rect width="39.86" height="39.0" fill="url(#gd)"/><rect x="3.2" y="3.5" width="33.67" height="32.52" fill="rgb(110,109,110)" rx=".8"/><rect x="6.39" y="7.25" width="4.27" height="3.41" fill="none" stroke="rgb(66,70,116)" stroke-width=".7"/><rect x="28.56" y="7.25" width="3.84" height="3.41" fill="none" stroke="rgb(66,70,116)" stroke-width=".7"/><rect x="6.39" y="29.41" width="4.27" height="3.41" fill="none" stroke="rgb(66,70,116)" stroke-width=".7"/><rect x="28.99" y="29.41" width="3.83" height="3.41" fill="none" stroke="rgb(66,70,116)" stroke-width=".7"/><rect x="14.92" y="7.03" width="3.92" height="2.01" fill="rgb(34,40,112)" /><rect x="19.61" y="7.46" width="3.19" height="1.28" fill="rgb(84,88,122)" /><rect x="15.13" y="11.08" width="8.31" height="0.86" fill="rgb(92,96,120)" /><rect x="10.44" y="12.36" width="2.13" height="14.49" fill="none" stroke="rgb(66,70,116)" stroke-width=".7"/><rect x="10.44" y="19.18" width="2.13" height="1.71" fill="rgb(66,70,116)" /><rect x="14.28" y="14.28" width="10.44" height="10.02" fill="rgb(114,110,110)" stroke="rgb(98,100,116)" stroke-width=".4"/><line x1="26.85" y1="14.07" x2="28.13" y2="24.3" stroke="rgb(88,92,116)" stroke-width="0.5"/><polygon points="19.61,24.72 23.44,28.56 19.61,32.61 15.98,28.56" fill="none" stroke="rgb(66,70,116)" stroke-width="1.1"/><line x1="4.26" y1="5.12" x2="6.39" y2="7.25" stroke="rgb(80,84,116)" stroke-width="0.5"/><line x1="32.82" y1="5.54" x2="31.12" y2="7.25" stroke="rgb(66,70,116)" stroke-width="0.8"/><line x1="32.82" y1="32.82" x2="35.38" y2="34.53" stroke="rgb(80,84,116)" stroke-width="0.6"/><line x1="6.39" y1="32.82" x2="5.12" y2="33.67" stroke="rgb(66,70,116)" stroke-width="0.8"/><line x1="4.26" y1="19.52" x2="8.1" y2="19.52" stroke="rgb(92,96,118)" stroke-width="0.5"/><line x1="30.26" y1="19.39" x2="34.1" y2="19.39" stroke="rgb(92,96,118)" stroke-width="0.5"/></g></svg>
<span class="t" style="left:289.2px;top:1178.0px;font-size:22.48px;letter-spacing:-0.55px;color:#121212;">DIGI-13</span>
<span class="t" style="left:289.4px;top:1209.0px;font-size:18.5px;letter-spacing:0.55px;color:rgb(50,53,57);">X-ray, test body for constancy testing</span>
<span class="t" style="left:289.5px;top:1234.0px;font-size:14.5px;letter-spacing:0.15px;color:rgb(48,51,55);">Scanditronix Wellhöfer GmbH</span>
<span class="t" style="left:705.1px;top:1197.0px;font-size:21px;letter-spacing:0.21px;color:#121212;">User training</span>
<span class="t" style="left:1120.8px;top:1197.0px;font-size:21px;letter-spacing:-0.10px;color:#121212;">0</span>
<span class="t" style="left:1441.2px;top:1197.0px;font-size:21px;letter-spacing:-0.10px;color:#121212;">0</span>
<span class="t" style="left:1761.0px;top:1197.0px;font-size:21px;letter-spacing:-0.10px;color:#121212;">1</span>
<span class="t" style="left:2017.1px;top:1197.0px;font-size:21px;letter-spacing:-0.10px;color:#121212;">0</span>
<span class="t" style="left:2273.5px;top:1197.0px;font-size:21px;letter-spacing:-0.10px;color:#121212;">0</span>
<div class="row" style="top:1258px;height:91px"></div>
<div class="cb" style="top:1286px"></div>
<svg class="i" style="left:195px;top:1287.6px" width="37" height="33" viewBox="0 0 37 33" ><g fill="none" stroke="rgb(73,77,82)" stroke-width="1.35" stroke-linejoin="round" stroke-linecap="round"><rect x="1.7" y="1.2" width="33.4" height="22.8" rx="3.5"/><rect x="0.8" y="24" width="35.4" height="7.5" rx="2.5"/><circle cx="5.2" cy="27.8" r="1.6"/><rect x="10" y="26.2" width="11.4" height="3.2" rx="1"/><rect x="25.6" y="26.5" width="2.8" height="2.7"/><rect x="30.3" y="26.500" width="2.8" height="2.7"/><polyline stroke-width="1.1" points="1.7,12.5 5,12.500 6,10.500 6.800,14.500 8,11 9.200,5 10.700,18 12.200,9.500 13,13.800 14,10.800 15,12.500 16.500,12.200 20.500,13.200 22,14 23,10 24.300,19 25.800,7.500 27.200,15.500 28.200,11.800 29.200,14.200 30.200,12.800 31.500,13 35.100,12.500"/></g></svg>
<span class="t" style="left:289.2px;top:1269.0px;font-size:22.03px;letter-spacing:-0.55px;color:#121212;">DR 9000</span>
<span class="t" style="left:289.4px;top:1301.0px;font-size:18.5px;letter-spacing:0.25px;color:rgb(50,53,57);">X-ray, digital radiography</span>
<span class="t" style="left:289.6px;top:1325.0px;font-size:14.68px;letter-spacing:0.55px;color:rgb(48,51,55);">Carestream Health GmbH</span>
<span class="t" style="left:705.1px;top:1288.0px;font-size:21px;letter-spacing:0.21px;color:#121212;">User training</span>
<span class="t" style="left:1120.7px;top:1288.0px;font-size:21px;letter-spacing:-0.10px;color:#121212;">3</span>
<span class="t" style="left:1441.2px;top:1288.0px;font-size:21px;letter-spacing:-0.10px;color:#121212;">1</span>
<span class="t" style="left:1761.0px;top:1288.0px;font-size:21px;letter-spacing:-0.10px;color:#121212;">1</span>
<span class="t" style="left:2017.1px;top:1288.0px;font-size:21px;letter-spacing:-0.10px;color:#121212;">0</span>
<span class="t" style="left:2273.5px;top:1288.0px;font-size:21px;letter-spacing:-0.10px;color:#121212;">0</span>
</div>
<span class="t" style="left:2695.3px;top:1321.0px;font-size:21px;letter-spacing:0.29px;color:#121212;">Total: 39</span>
</main>
<div id="menu" role="menu">
<i style="top:89px"></i>
<i style="top:165px"></i>
<i style="top:241px"></i>
<i style="top:316px"></i>
<i style="top:392px"></i>
<a class="t" role="menuitem" style="left:20.0px;top:39.0px;font-size:25.5px;letter-spacing:0.25px;color:#1c1c1e;-webkit-text-stroke:.5px #1c1c1e;">Tasks</a>
<a class="t" role="menuitem" style="left:19.8px;top:115.0px;font-size:25.5px;letter-spacing:-0.22px;color:#1c1c1e;-webkit-text-stroke:.5px #1c1c1e;">Shared trainings</a>
<a class="t" role="menuitem" style="left:20.0px;top:191.0px;font-size:25.48px;letter-spacing:-0.55px;color:#1c1c1e;-webkit-text-stroke:.5px #1c1c1e;">Groups</a>
<a class="t" role="menuitem" style="left:19.7px;top:267.0px;font-size:25.5px;letter-spacing:-0.15px;color:rgb(41,99,176);-webkit-text-stroke:.7px rgb(41,99,176);">Device model trainings</a>
<a class="t" role="menuitem" style="left:19.7px;top:343.0px;font-size:25.5px;letter-spacing:-0.20px;color:#1c1c1e;-webkit-text-stroke:.5px #1c1c1e;">Employee trainings</a>
<a class="t" role="menuitem" style="left:19.7px;top:419.0px;font-size:25.5px;letter-spacing:-0.30px;color:#1c1c1e;-webkit-text-stroke:.5px #1c1c1e;">Device and employee matrix</a>
</div>
<div class="ledge"></div><div class="corner"></div><div class="corner2"></div>
</div></body></html>
